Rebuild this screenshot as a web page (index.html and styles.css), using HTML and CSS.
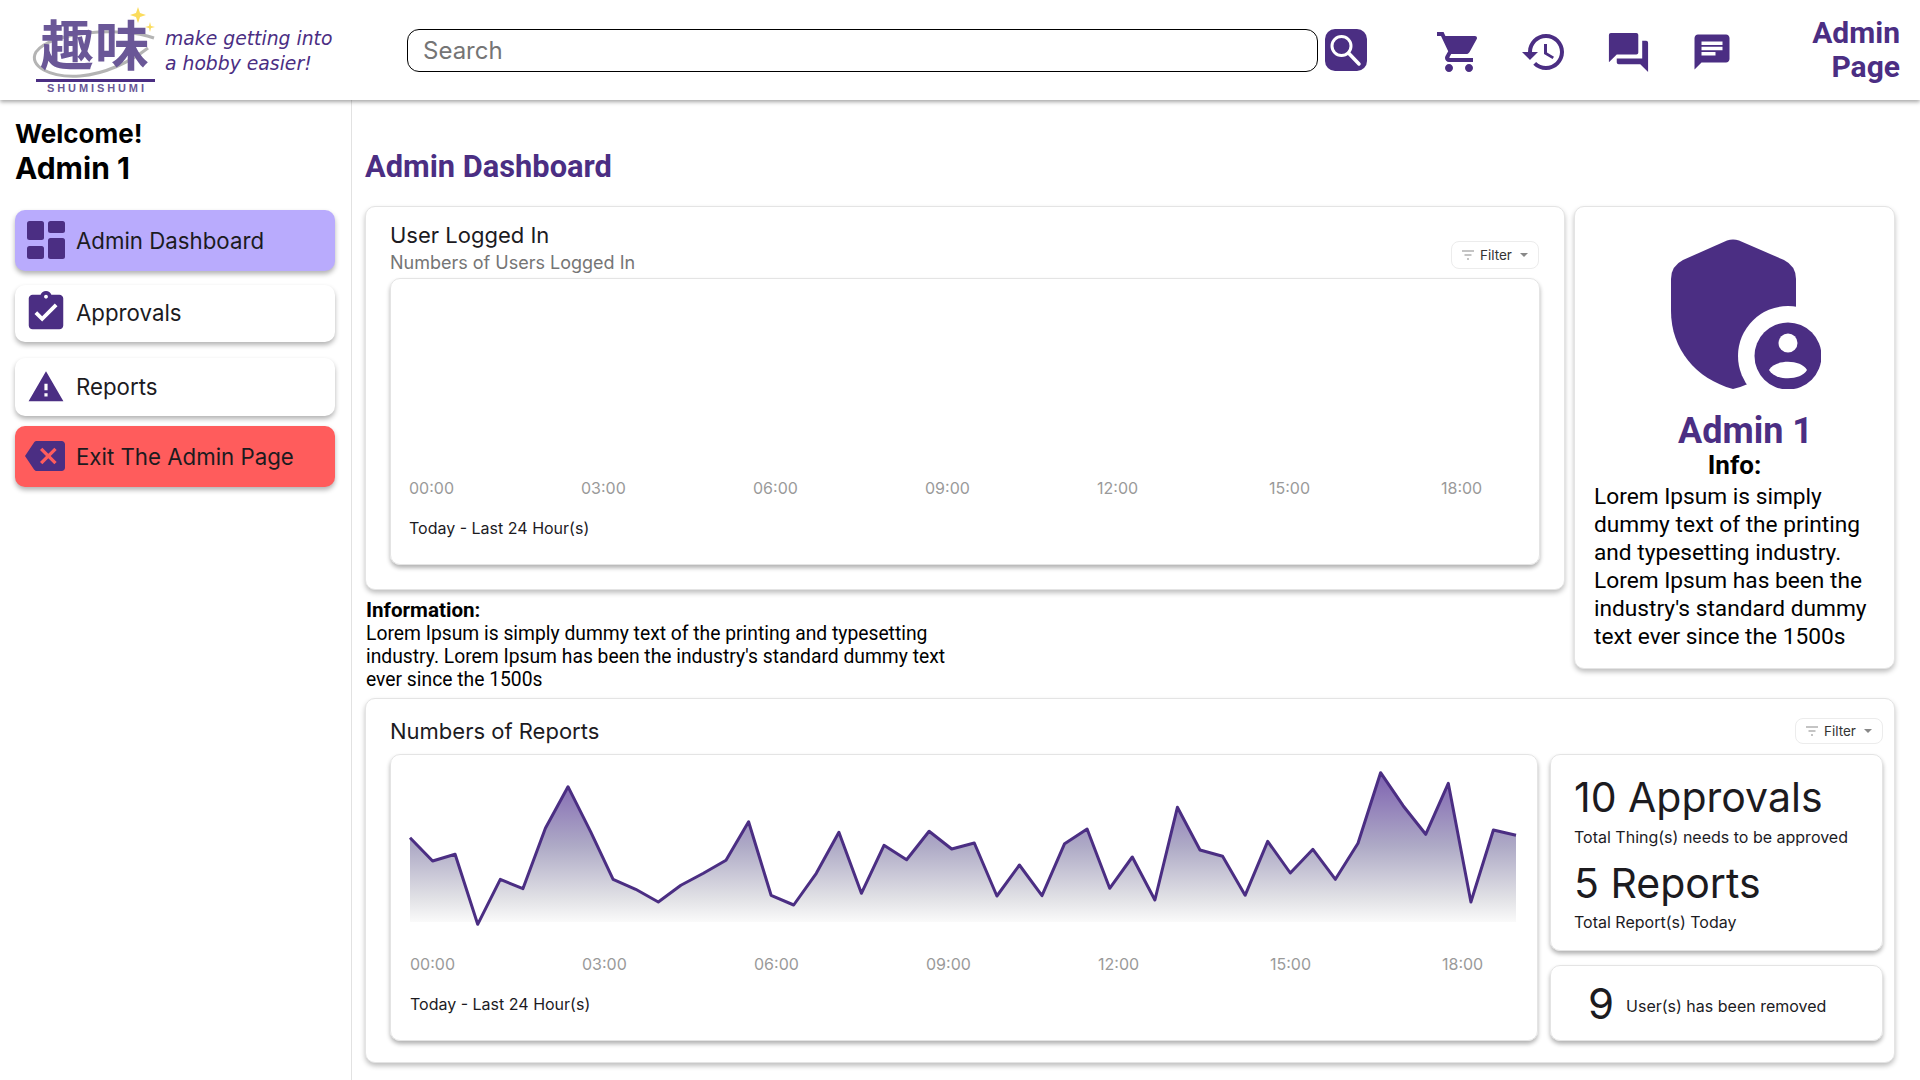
FILE: index.html
```html
<!DOCTYPE html>
<html lang="en">
<head>
	<meta charset="UTF-8">
	<title>Shumishumi - Admin Dashboard</title>
	<link rel="stylesheet" href="styles.css">
</head>
<body>

	<header class="topbar">
		<svg class="logo" viewBox="0 0 130 92" width="130" height="92">
			<path d="M124 34 C90 22 20 28 6 48 C-2 62 20 74 50 72 C75 70 100 58 118 44" fill="none" stroke="#b4b4b4" stroke-width="3"/>
			<text x="10" y="62" class="logo-kanji">趣味</text>
			<path d="M108 3 L110 9 L116 11 L110 13 L108 19 L106 13 L100 11 L106 9 Z" fill="#fbdc5c"/>
			<path d="M120 18 L121 22 L125 23 L121 24 L120 28 L119 24 L115 23 L119 22 Z" fill="#fbdc5c"/>
			<rect x="6" y="75" width="119" height="3" fill="#4b2e83"/>
			<text x="17" y="88" class="logo-name">SHUMISHUMI</text>
		</svg>
		<p class="tagline">make getting into<br>a hobby easier!</p>

		<div class="search">Search</div>
		<button class="search-btn">
			<svg viewBox="0 0 42 42" width="42" height="42"><circle cx="16.5" cy="17" r="9.5" fill="none" stroke="#fff" stroke-width="3"/><line x1="23.5" y1="24" x2="34" y2="35" stroke="#fff" stroke-width="3.5" stroke-linecap="round"/></svg>
		</button>

		<div class="top-icons">
			<svg viewBox="0 0 24 24" width="48" height="48"><path d="M7 18c-1.1 0-1.99.9-1.99 2S5.9 22 7 22s2-.9 2-2-.9-2-2-2zM1 2v2h2l3.6 7.59-1.35 2.45c-.16.28-.25.61-.25.96 0 1.1.9 2 2 2h12v-2H7.42c-.14 0-.25-.11-.25-.25l.03-.12.9-1.63h7.45c.75 0 1.41-.41 1.75-1.03l3.58-6.49c.08-.14.12-.31.12-.48 0-.55-.45-1-1-1H5.21l-.94-2H1zm16 16c-1.1 0-1.99.9-1.99 2s.89 2 1.99 2 2-.9 2-2-.9-2-2-2z"/></svg>
			<svg viewBox="0 0 24 24" width="48" height="48"><path d="M13 3c-4.97 0-9 4.03-9 9H1l3.89 3.89.07.14L9 12H6c0-3.87 3.13-7 7-7s7 3.13 7 7-3.13 7-7 7c-1.93 0-3.68-.79-4.94-2.06l-1.42 1.42C8.27 19.99 10.51 21 13 21c4.97 0 9-4.03 9-9s-4.03-9-9-9zm-1 5v5l4.28 2.54.72-1.21-3.5-2.08V8H12z"/></svg>
			<svg class="forum-icon" viewBox="0 0 24 24" width="47" height="47"><path d="M21 6h-2v9H6v2c0 .55.45 1 1 1h11l4 4V7c0-.55-.45-1-1-1zm-4 6V3c0-.55-.45-1-1-1H3c-.55 0-1 .45-1 1v14l4-4h10c.55 0 1-.45 1-1z"/></svg>
			<svg class="chat-icon" viewBox="0 0 24 24" width="42" height="42"><path d="M20 2H4c-1.1 0-1.99.9-1.99 2L2 22l4-4h14c1.1 0 2-.9 2-2V4c0-1.1-.9-2-2-2zM6 9h12v2H6V9zm8 5H6v-2h8v2zm4-6H6V6h12v2z"/></svg>
		</div>

		<a href="#admin" class="admin-link">Admin<br>Page</a>
	</header>

	<div class="page">
		<aside class="sidebar">
			<p class="welcome">Welcome!</p>
			<p class="welcome-name">Admin 1</p>

			<nav class="nav">
				<a href="#dashboard" class="nav-item active">
					<svg viewBox="0 0 38 38" width="38" height="38"><rect width="17" height="19" rx="2.5"/><rect y="25" width="17" height="13" rx="2.5"/><rect x="21" width="17" height="12" rx="2.5"/><rect x="21" y="17" width="17" height="21" rx="2.5"/></svg>
					Admin Dashboard
				</a>
				<a href="#approvals" class="nav-item approvals">
					<svg viewBox="0 0 24 24" width="46" height="46"><path d="M19 3h-4.18C14.4 1.84 13.3 1 12 1c-1.3 0-2.4.84-2.82 2H5c-1.1 0-2 .9-2 2v14c0 1.1.9 2 2 2h14c1.1 0 2-.9 2-2V5c0-1.1-.9-2-2-2zm-7 0c.55 0 1 .45 1 1s-.45 1-1 1-1-.45-1-1 .45-1 1-1zm-2 14l-4-4 1.41-1.41L10 14.17l6.59-6.59L18 9l-8 8z"/></svg>
					Approvals
				</a>
				<a href="#reports" class="nav-item reports">
					<svg viewBox="0 0 24 24" width="38" height="38"><path d="M1 21h22L12 2 1 21zm12-3h-2v-2h2v2zm0-4h-2v-4h2v4z"/></svg>
					Reports
				</a>
				<a href="#exit" class="nav-item exit">
					<svg viewBox="0 0 24 24" width="40" height="40"><path d="M22 3H7c-.69 0-1.23.35-1.59.88L0 12l5.41 8.11c.36.53.9.89 1.59.89h15c1.1 0 2-.9 2-2V5c0-1.1-.9-2-2-2zm-3 12.59L17.59 17 14 13.41 10.41 17 9 15.59 12.59 12 9 8.41 10.41 7 14 10.59 17.59 7 19 8.41 15.41 12 19 15.59z"/></svg>
					Exit The Admin Page
				</a>
			</nav>
		</aside>

		<main class="main">
			<h1 class="page-title">Admin Dashboard</h1>

			<div class="top-row">
				<div class="left-col">
					<section class="card users-card">
						<div class="card-head">
							<div>
								<h2 class="card-title">User Logged In</h2>
								<p class="card-sub">Numbers of Users Logged In</p>
							</div>
							<button class="filter"><svg viewBox="0 0 14 10" width="14" height="10"><path d="M1 1h12M3.5 5h7M6 9h2" stroke="#8a8a8a" stroke-width="1.1" fill="none"/></svg>Filter<span class="caret"></span></button>
						</div>
						<div class="chart empty-chart">
							<div class="times">
								<span>00:00</span><span>03:00</span><span>06:00</span><span>09:00</span><span>12:00</span><span>15:00</span><span>18:00</span>
							</div>
							<p class="chart-foot">Today - Last 24 Hour(s)</p>
						</div>
					</section>

					<div class="info">
						<strong>Information:</strong><br>
						Lorem Ipsum is simply dummy text of the printing and typesetting industry. Lorem Ipsum has been the industry's standard dummy text ever since the 1500s
					</div>
				</div>

				<section class="card admin-card">
					<svg class="shield" viewBox="0 0 150 150" width="150" height="150">
						<path d="M56 1.5 Q62 -.5 68 1.5 L113 21 Q125 27 125 40 V72 C125 110 100 140 62 150 C25 140 0 110 0 72 V40 Q0 27 12 21 Z"/>
						<circle cx="117" cy="117" r="50" fill="#fff"/>
						<circle cx="117" cy="117" r="33.5"/>
						<circle cx="117" cy="104" r="9.5" fill="#fff"/>
						<path d="M98 131 C104 120 130 120 136 131 C130 142 104 142 98 131 Z" fill="#fff"/>
					</svg>
					<h2 class="admin-name">Admin 1</h2>
					<h3 class="admin-info">Info:</h3>
					<p class="admin-text">Lorem Ipsum is simply dummy text of the printing and typesetting industry. Lorem Ipsum has been the industry's standard dummy text ever since the 1500s</p>
				</section>
			</div>

			<section class="card reports-card">
				<div class="reports-head">
					<h2 class="card-title">Numbers of Reports</h2>
					<button class="filter short"><svg viewBox="0 0 14 10" width="14" height="10"><path d="M1 1h12M3.5 5h7M6 9h2" stroke="#8a8a8a" stroke-width="1.1" fill="none"/></svg>Filter<span class="caret"></span></button>
				</div>
				<div class="reports-body">
					<div class="chart area-chart">
						<svg class="line-chart" viewBox="0 0 1112 160" width="1112" height="160">
							<defs>
								<linearGradient id="fade" gradientUnits="userSpaceOnUse" x1="0" y1="0" x2="0" y2="152">
									<stop offset="0" stop-color="#7c5fb0"/>
									<stop offset="0.5" stop-color="#aeaac6"/>
									<stop offset="0.85" stop-color="#e2e2e6"/>
									<stop offset="1" stop-color="#fafafa"/>
								</linearGradient>
							</defs>
							<polygon fill="url(#fade)" points="2,152 2,67.7 24.6,91 47.1,84.3 69.7,152 92.3,109.3 114.9,118.7 137.4,58.3 160,16.7 182.6,61.7 205.1,109.3 227.7,119.3 250.3,132 272.9,115.3 295.4,103.3 318,90.3 340.6,51.7 363.1,125.3 385.7,135 408.3,103.3 430.9,62.3 453.4,123.3 476,75.3 498.6,89.7 521.1,61.3 543.7,79 566.3,73 588.9,126 611.4,95 634,125.7 656.6,73.7 679.1,59 701.7,118.3 724.3,87 746.9,130 769.4,37.3 792,80 814.6,86.3 837.1,125.3 859.7,71.3 882.3,103 904.9,79.3 927.4,109.3 950,73.3 972.6,2.7 995.1,35.7 1017.7,64.3 1040.3,13.3 1062.9,132 1085.4,60 1108,65.3 1108,152"/>
							<polyline fill="none" stroke="#4b2e83" stroke-width="3" stroke-linejoin="round" points="2,67.7 24.6,91 47.1,84.3 69.7,154.3 92.3,109.3 114.9,118.7 137.4,58.3 160,16.7 182.6,61.7 205.1,109.3 227.7,119.3 250.3,132 272.9,115.3 295.4,103.3 318,90.3 340.6,51.7 363.1,125.3 385.7,135 408.3,103.3 430.9,62.3 453.4,123.3 476,75.3 498.6,89.7 521.1,61.3 543.7,79 566.3,73 588.9,126 611.4,95 634,125.7 656.6,73.7 679.1,59 701.7,118.3 724.3,87 746.9,130 769.4,37.3 792,80 814.6,86.3 837.1,125.3 859.7,71.3 882.3,103 904.9,79.3 927.4,109.3 950,73.3 972.6,2.7 995.1,35.7 1017.7,64.3 1040.3,13.3 1062.9,132 1085.4,60 1108,65.3"/>
						</svg>
						<div class="times">
							<span>00:00</span><span>03:00</span><span>06:00</span><span>09:00</span><span>12:00</span><span>15:00</span><span>18:00</span>
						</div>
						<p class="chart-foot">Today - Last 24 Hour(s)</p>
					</div>

					<div class="side-stats">
						<div class="stat-card totals">
							<p class="stat-big">10 Approvals</p>
							<p class="stat-small">Total Thing(s) needs to be approved</p>
							<p class="stat-big second">5 Reports</p>
							<p class="stat-small">Total Report(s) Today</p>
						</div>
						<div class="stat-card removed">
							<span class="stat-num">9</span>
							<span class="stat-small">User(s) has been removed</span>
						</div>
					</div>
				</div>
			</section>
		</main>
	</div>

</body>
</html>
```

FILE: styles.css
```css
* {
	box-sizing: border-box;
}

body {
	margin: 0;
	height: 1080px;
	overflow: hidden;
	background: #fff;
	font-family: Inter, "Liberation Sans", sans-serif;
	color: #1c1b1f;
}

p, h1, h2, h3 {
	margin: 0;
}

a {
	color: inherit;
	text-decoration: none;
}

svg {
	display: block;
	flex: none;
	fill: #4b2e83;
}

/* top bar */

.topbar {
	position: relative;
	z-index: 10;
	display: flex;
	align-items: center;
	height: 100px;
	padding: 0 20px 0 30px;
	background: #fff;
	box-shadow: 0 2px 4px rgba(0, 0, 0, .35);
}

.logo-kanji {
	font-family: "Noto Sans CJK JP", sans-serif;
	font-size: 54px;
	font-weight: 700;
	letter-spacing: 1px;
	fill: #6a5797;
}

.logo-name {
	font-family: "Liberation Sans", sans-serif;
	font-size: 11px;
	font-weight: 700;
	letter-spacing: 2.9px;
	fill: #6a5797;
}

.tagline {
	width: 242px;
	margin: 2px 0 0 5px;
	font-family: "DejaVu Sans", sans-serif;
	font-style: italic;
	font-size: 18.8px;
	line-height: 25px;
	color: #4b2e83;
}

.search {
	width: 911px;
	height: 43px;
	padding-left: 15px;
	border: 1px solid #000;
	border-radius: 12px;
	font-size: 24px;
	line-height: 41px;
	color: #757575;
}

.search-btn {
	width: 42px;
	height: 42px;
	margin-left: 7px;
	padding: 0;
	border: 0;
	border-radius: 10px;
	background: #4b2e83;
}

.top-icons {
	display: flex;
	align-items: center;
	gap: 37px;
	margin: 4px 0 0 68px;
}

.chat-icon {
	margin-left: 2px;
}

.admin-link {
	margin-left: auto;
	font-family: Roboto, sans-serif;
	font-weight: 700;
	font-size: 30px;
	line-height: 34px;
	text-align: right;
	color: #4b2e83;
}

/* sidebar */

.page {
	display: flex;
	height: 980px;
}

.sidebar {
	width: 352px;
	flex: none;
	padding: 17px 16px 0 15px;
	border-right: 1px solid #e2e2e2;
}

.welcome {
	font-size: 26px;
	font-weight: 700;
	line-height: 33px;
	color: #000;
}

.welcome-name {
	font-size: 30px;
	font-weight: 700;
	line-height: 36px;
	color: #000;
}

.nav {
	margin-top: 24px;
}

.nav-item {
	display: flex;
	align-items: center;
	gap: 11px;
	height: 61px;
	padding: 0 0 1px 12px;
	border-radius: 10px;
	background: #fff;
	font-size: 22.25px;
	box-shadow: 0 3px 5px rgba(0, 0, 0, .3);
}

.nav-item.active {
	background: #b9abfd;
}

.nav-item.approvals {
	height: 57px;
	margin-top: 14px;
	padding-bottom: 3px;
}

.approvals svg {
	margin: 0 -4px;
}

.nav-item.reports {
	height: 58px;
	margin-top: 16px;
}

.nav-item.exit {
	height: 61px;
	margin-top: 10px;
	background: #ff5c5c;
}

.exit svg {
	margin-left: -2px;
}

/* main area */

.main {
	flex: 1;
	padding: 49px 0 0 13px;
}

.page-title {
	font-family: Roboto, sans-serif;
	font-size: 30.8px;
	font-weight: 700;
	line-height: 36px;
	color: #4b2e83;
}

.top-row {
	display: flex;
	align-items: flex-start;
	gap: 9px;
	margin-top: 21px;
}

.left-col {
	width: 1200px;
}

.card {
	border: 1px solid #e4e4e4;
	border-radius: 10px;
	background: #fff;
	box-shadow: 0 3px 5px rgba(0, 0, 0, .25);
}

.users-card {
	height: 384px;
	padding: 15px 24px 0;
}

.card-head {
	display: flex;
	justify-content: space-between;
	height: 56px;
}

.card-title {
	font-size: 22px;
	font-weight: 400;
	line-height: 26px;
}

.card-sub {
	margin-top: 3px;
	font-size: 18px;
	line-height: 24px;
	color: #757575;
}

.filter {
	display: flex;
	align-items: center;
	gap: 5px;
	width: 88px;
	height: 28px;
	margin: 19px 1px 0 0;
	padding: 0 0 0 9px;
	border: 1px solid #ececec;
	border-radius: 8px;
	background: #fff;
	font-family: Inter, sans-serif;
	font-size: 13.5px;
	color: #333;
}

.filter.short {
	height: 26px;
	margin: 0;
}

.caret {
	width: 0;
	height: 0;
	margin-left: 3px;
	border-left: 4px solid transparent;
	border-right: 4px solid transparent;
	border-top: 4px solid #888;
}

.chart {
	display: flex;
	flex-direction: column;
	justify-content: flex-end;
	height: 287px;
	border: 1px solid #e4e4e4;
	border-radius: 10px;
	box-shadow: 0 3px 4px rgba(0, 0, 0, .3);
}

.times {
	display: flex;
	padding-left: 18px;
	font-size: 16px;
	line-height: 20px;
	color: #9a9a9a;
}

.times span {
	flex: none;
	width: 172px;
}

.times span:last-child {
	width: auto;
}

.chart-foot {
	margin-top: 20px;
	padding: 0 0 26px 18px;
	font-size: 16px;
	line-height: 20px;
}

.info {
	width: 600px;
	margin: 9px 0 0 1px;
	font-family: Roboto, sans-serif;
	font-size: 19.3px;
	line-height: 23px;
	color: #000;
}

.info strong {
	font-size: 20.6px;
}

.admin-card {
	display: flex;
	flex-direction: column;
	align-items: center;
	width: 321px;
	height: 463px;
	padding: 32px 19px 0;
}

.shield {
	margin-left: 22px;
}

.admin-name {
	margin: 21px 0 0 22px;
	font-family: Roboto, sans-serif;
	font-size: 36px;
	font-weight: 700;
	line-height: 42px;
	color: #4b2e83;
}

.admin-info {
	font-family: Roboto, sans-serif;
	font-size: 26px;
	font-weight: 700;
	line-height: 27px;
	color: #000;
}

.admin-text {
	align-self: stretch;
	margin-top: 4px;
	font-family: Roboto, sans-serif;
	font-size: 22.7px;
	line-height: 28px;
	color: #000;
}

/* reports */

.reports-card {
	width: 1530px;
	height: 365px;
	margin-top: 7px;
	padding: 19px 11px 0 24px;
}

.reports-head {
	display: flex;
	justify-content: space-between;
	align-items: center;
	height: 26px;
}

.reports-body {
	display: flex;
	gap: 12px;
	margin-top: 10px;
}

.area-chart {
	width: 1148px;
	height: 287px;
}

.line-chart {
	margin: 15px 0 auto 17px;
}

.area-chart .times {
	padding-left: 19px;
}

.area-chart .chart-foot {
	padding-left: 19px;
}

.side-stats {
	width: 333px;
}

.stat-card {
	border: 1px solid #e4e4e4;
	border-radius: 10px;
	box-shadow: 0 3px 4px rgba(0, 0, 0, .3);
}

.totals {
	height: 197px;
	padding: 18px 0 0 23px;
}

.stat-big {
	font-size: 41px;
	line-height: 48px;
}

.stat-big.second {
	margin-top: 12px;
}

.stat-small {
	margin-top: 6px;
	font-size: 16px;
	line-height: 20px;
}

.totals .second + .stat-small {
	margin-top: 5px;
}

.removed {
	display: flex;
	align-items: center;
	gap: 12px;
	height: 76px;
	margin-top: 14px;
	padding-left: 37px;
}

.stat-num {
	font-size: 42px;
}
```
